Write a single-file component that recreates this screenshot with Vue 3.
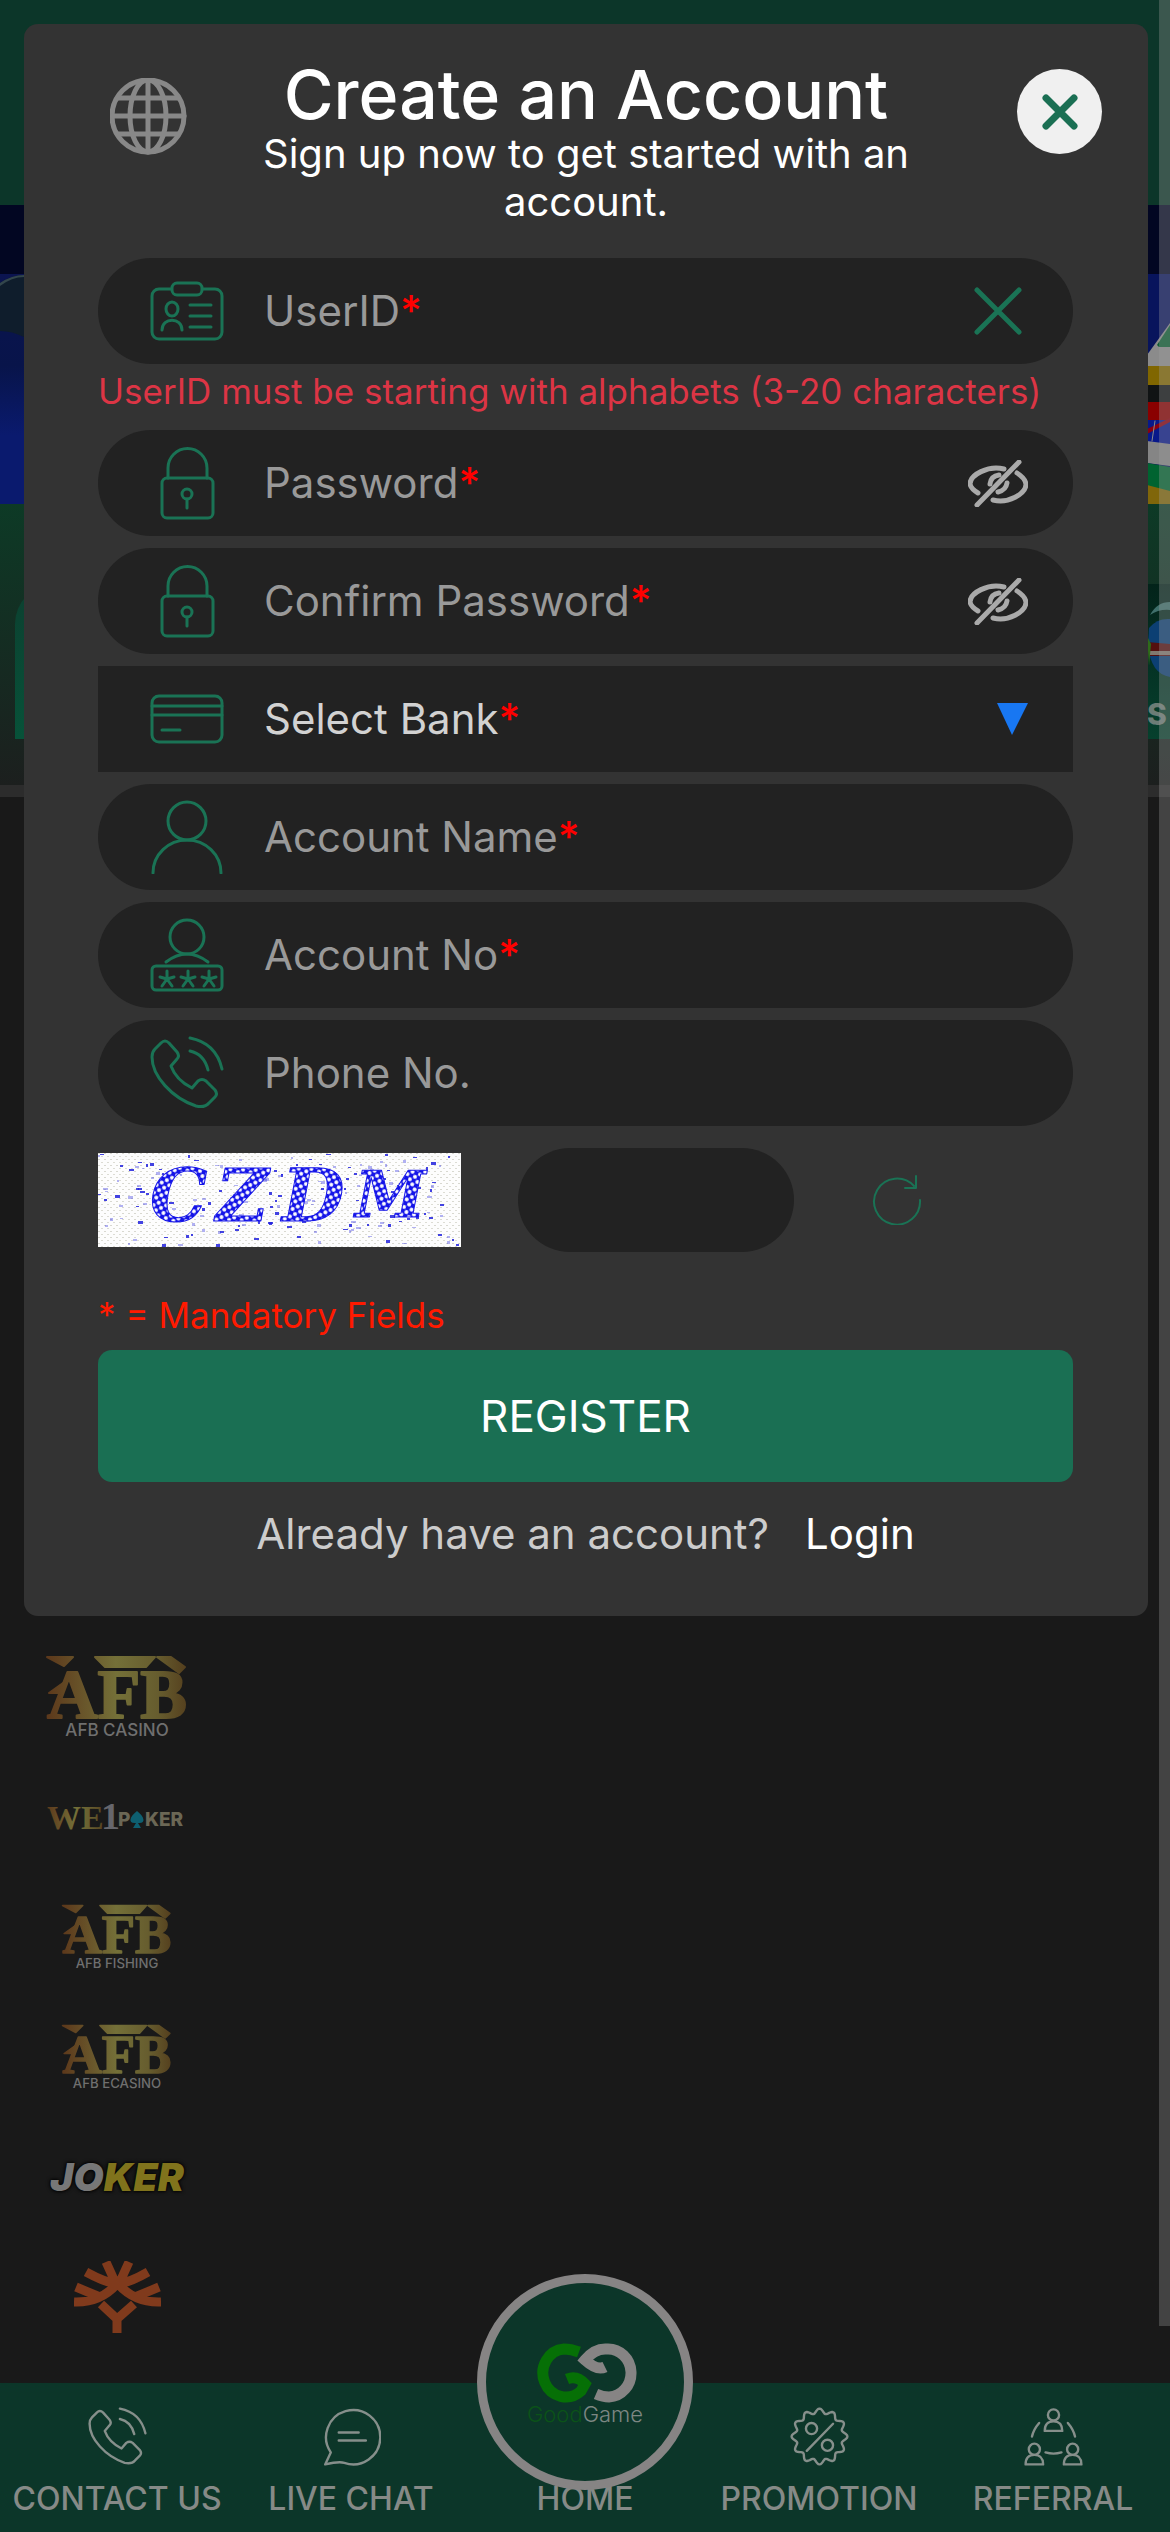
<script setup>
import { ref } from 'vue'

const icons = {
  id: '<rect x="1" y="14" width="70" height="50" rx="7"/><rect x="21" y="8" width="30" height="12" rx="5" fill="#222"/><ellipse cx="21" cy="34" rx="6" ry="7"/><path d="M11 55c0-13 20-13 20 0M39 30h21M39 41h21M39 52h21"/>',
  lock: '<rect x="11" y="31" width="51" height="40" rx="5"/><path d="M17 31V21a19 19 0 0 1 39 0v10M36 52v9"/><circle cx="36" cy="47" r="5"/>',
  card: '<rect x="1" y="13" width="70" height="46" rx="7"/><path d="M1 23h70M1 32h70M11 47h18"/>',
  person: '<circle cx="36" cy="20" r="19"/><path d="M2 72a34 33 0 0 1 68 0"/>',
  account: '<circle cx="36" cy="18" r="17"/><path d="M15 43q21-16 42 0"/><rect x="1" y="47" width="70" height="24" rx="4"/><path d="M16 52v8M9 58l7 2 7-2M11 67l5-7 5 7M37 52v8M30 58l7 2 7-2M32 67l5-7 5 7M58 52v8M51 58l7 2 7-2M53 67l5-7 5 7"/>',
  phone: '<path d="M10 6q4-4 8 0l8 9q3 4 0 7l-6 7q5 14 21 22l6-7q4-3 8 0l9 9q3 4 0 7l-6 6q-4 5-13 3C21 61 1 39 1 20q0-5 3-8zM39 1q26 5 32 31M39 14q14 3 18 19"/>',
  chat: '<path d="M3 71l7-15A34 34 0 1 1 27 69q-7-2-24 2zM20 31h25M20 41h34"/>',
  referral: '<circle cx="36" cy="9" r="7"/><path d="M25 29q0-12 11-12t11 12z"/><circle cx="12" cy="52" r="7"/><path d="M1 71q0-12 11-12t11 12z"/><circle cx="60" cy="52" r="7"/><path d="M49 71q0-12 11-12t11 12zM18 19q-7 8-9 17M54 19q7 8 9 17M26 56q10 3 20 0"/>'
}

const badgePoints = Array.from({ length: 144 }, (_, i) => {
  const a = (i / 144) * Math.PI * 2 - Math.PI / 2
  const r = 32 + 3 * Math.cos(12 * a)
  return `${(36 + r * Math.cos(a)).toFixed(1)},${(36 + r * Math.sin(a)).toFixed(1)}`
}).join(' ')
icons.promo = `<polygon points="${badgePoints}"/><circle cx="26" cy="26" r="7"/><circle cx="46" cy="47" r="7"/><path d="M20 54L53 20"/>`

const userId = ref('')
const form = ref({ password: '', confirm: '', name: '', number: '', phone: '' })
const bank = ref('')
const captcha = ref('')

const passwords = [
  { id: 'password', label: 'Password' },
  { id: 'confirm', label: 'Confirm Password' }
]
const details = [
  { id: 'name', label: 'Account Name', icon: 'person', required: true },
  { id: 'number', label: 'Account No', icon: 'account', required: true },
  { id: 'phone', label: 'Phone No.', icon: 'phone', required: false }
]

let seed = 11
const next = () => (seed = (seed * 16807) % 2147483647) / 2147483647
const specks = Array.from({ length: 190 }, () => ({
  x: Math.round(next() * 360),
  y: Math.round(next() * 92),
  w: 2 + Math.round(next() * 3),
  h: 1 + Math.round(next() * 2),
  o: next() > 0.5 ? 0.85 : 0.35
}))

const navLeft = [
  { label: 'CONTACT US', icon: 'phone' },
  { label: 'LIVE CHAT', icon: 'chat' }
]
const navRight = [
  { label: 'PROMOTION', icon: 'promo' },
  { label: 'REFERRAL', icon: 'referral' }
]
</script>

<template>
  <div class="page">
    <div class="topbar"></div>
    <div class="hero">
      <svg class="hero-left" viewBox="0 0 24 299" aria-hidden="true">
        <defs>
          <linearGradient id="sea" x1="0" y1="0" x2="0" y2="1">
            <stop offset="0" stop-color="#0b1450" />
            <stop offset="0.4" stop-color="#08144a" />
            <stop offset="0.7" stop-color="#0a1a6e" />
          </linearGradient>
        </defs>
        <rect width="24" height="299" fill="#020622" />
        <rect y="69" width="24" height="230" fill="url(#sea)" />
        <path d="M0 78q12-8 24-8v62q-12-6-24-6z" fill="#0f1d2c" />
        <path d="M0 78q12-8 24-8v2q-12 0-24 9z" fill="#33464c" />
      </svg>
      <svg class="hero-right" viewBox="0 0 23 299" aria-hidden="true">
        <rect width="23" height="299" fill="#020622" />
        <rect y="69" width="23" height="230" fill="#08145c" />
        <path d="M0 150L23 118v44H0z" fill="#8b8b8b" />
        <path d="M10 140l13-20v22H12z" fill="#0c5d33" />
        <rect y="161" width="23" height="19" fill="#806600" />
        <rect y="180" width="23" height="17" fill="#101314" />
        <rect y="197" width="23" height="18" fill="#8a0000" />
        <rect y="215" width="23" height="24" fill="#08188a" />
        <path d="M0 229l23-12v-4L0 224z" fill="#8a0010" />
        <path d="M5 236l3-20" stroke="#8b8b8b" />
        <path d="M0 236l23 3v22L0 258z" fill="#858585" />
        <path d="M0 258l23 4v26L0 282z" fill="#006330" />
        <path d="M0 280l23 6v13H0z" fill="#80660a" />
      </svg>
    </div>
    <div class="lobby">
      <div class="tile">
        <div class="tile-end">
          <svg class="ball" viewBox="0 0 23 84" aria-hidden="true">
            <path d="M3 15Q10 2 23 2v8Q12 9 3 15z" fill="#3f6f6b" />
            <path d="M2 28q8-10 21-9v58Q4 74 1 46z" fill="#0c3f73" />
            <path d="M0 42l23 2v12H2z" fill="#54100f" />
            <path d="M2 51h21v4H2z" fill="#82786f" />
            <path d="M0 36l4 8-2 22z" fill="#2f6b1a" />
          </svg>
          <span class="tile-text">S</span>
        </div>
      </div>
    </div>
    <div class="divider"></div>

    <ul class="providers">
      <li>
        <svg class="logo-large" viewBox="0 0 144 84" role="img" aria-label="AFB Casino">
          <defs>
            <linearGradient id="gold" x1="0" x2="1">
              <stop offset="0" stop-color="#5c381b" />
              <stop offset="0.5" stop-color="#747038" />
              <stop offset="0.8" stop-color="#665c2e" />
              <stop offset="1" stop-color="#55401e" />
            </linearGradient>
          </defs>
          <g class="gold-mark">
            <text class="afb" x="72" y="63" text-anchor="middle">AFB</text>
            <path d="M2 2h26l-9 9zM50 2h60l-9 10H60zM112 2h14l14 10-6 6zM4 38l14-10v10z" />
          </g>
          <text class="afb-sub" x="72" y="81" text-anchor="middle">AFB CASINO</text>
        </svg>
      </li>
      <li>
        <svg class="logo-large" viewBox="0 0 144 84" role="img" aria-label="We1Poker">
          <text class="we" x="2" y="54" fill="url(#gold)">WE</text>
          <text class="we-one" x="56" y="54">1</text>
          <text class="we-poker" x="73" y="51">P</text>
          <path d="M92 36c8 6 9 13 1 12l3 5h-8l3-5c-8 1-7-6 1-12z" fill="#0e5f70" />
          <text class="we-poker" x="100" y="51">KER</text>
        </svg>
      </li>
      <li v-for="name in ['AFB FISHING', 'AFB ECASINO']" :key="name">
        <svg class="logo-small" viewBox="0 0 144 84" role="img" :aria-label="name">
          <g class="gold-mark">
            <text class="afb" x="72" y="63" text-anchor="middle">AFB</text>
            <path d="M2 2h26l-9 9zM50 2h60l-9 10H60zM112 2h14l14 10-6 6zM4 38l14-10v10z" />
          </g>
          <text class="afb-sub" x="72" y="82" text-anchor="middle">{{ name }}</text>
        </svg>
      </li>
      <li>
        <p class="joker"><span class="joker-a">JO</span><span class="joker-b">KER</span></p>
      </li>
      <li>
        <svg class="tree" viewBox="0 0 87 72" aria-hidden="true">
          <path d="M43 72V58L27 43M43 58l17-15" />
          <path d="M0 41Q26 42 43 23Q55 22 74 11M87 41Q61 42 44 23Q32 22 12 11M2 26l24 10M85 26L61 36M32 1l10 22M55 1L45 23" />
        </svg>
      </li>
    </ul>

    <nav class="bottom-nav">
      <a v-for="n in navLeft" :key="n.label" href="#" class="nav-item">
        <svg class="nav-icon" viewBox="-1 -1 74 74" aria-hidden="true" v-html="icons[n.icon]"></svg>
        <span>{{ n.label }}</span>
      </a>
      <a href="#" class="nav-item home">
        <span>HOME</span>
        <span class="home-disc">
          <svg class="gg" viewBox="0 0 120 60" aria-hidden="true">
            <path d="M54 9Q46 6 39 6A23 24 0 1 0 56 48L60 41Q52 32 42 36" stroke="#067006" />
            <path d="M80 24Q72 28 60 17Q70 5 82 6A23 24 0 0 1 84 54Q78 54 71 51" stroke="#868484" />
          </svg>
          <span class="brand"><span class="good">Good</span>Game</span>
        </span>
      </a>
      <a v-for="n in navRight" :key="n.label" href="#" class="nav-item">
        <svg class="nav-icon" viewBox="-1 -1 74 74" aria-hidden="true" v-html="icons[n.icon]"></svg>
        <span>{{ n.label }}</span>
      </a>
    </nav>

    <div class="scrollbar"></div>

    <section class="modal" role="dialog" aria-labelledby="modal-title">
      <header class="modal-head">
        <button type="button" class="language" aria-label="Language">
          <svg viewBox="0 0 77 77" aria-hidden="true">
            <circle cx="38" cy="38" r="36" />
            <ellipse cx="38" cy="38" rx="18" ry="36" />
            <path d="M38 2v72M2 38h72M8 20h60M8 56h60" />
          </svg>
        </button>
        <div class="titles">
          <h1 id="modal-title">Create an Account</h1>
          <p>Sign up now to get started with an account.</p>
        </div>
        <button type="button" class="close" aria-label="Close">
          <svg viewBox="0 0 36 36" aria-hidden="true"><path d="M4 4l28 28M32 4L4 32" /></svg>
        </button>
      </header>

      <form class="form" @submit.prevent>
        <div class="group">
          <div class="field">
            <svg class="icon" viewBox="-1 -1 74 74" aria-hidden="true" v-html="icons.id"></svg>
            <div class="entry">
              <label for="userid">UserID<b>*</b></label>
              <input id="userid" v-model="userId" type="text" />
            </div>
            <button type="button" class="end" aria-label="Clear">
              <svg class="clear" viewBox="0 0 48 48" aria-hidden="true"><path d="M3 3l42 42M45 3L3 45" /></svg>
            </button>
          </div>
          <p class="error">UserID must be starting with alphabets (3-20 characters)</p>
        </div>

        <div v-for="p in passwords" :key="p.id" class="field">
          <svg class="icon" viewBox="-1 -1 74 74" aria-hidden="true" v-html="icons.lock"></svg>
          <div class="entry">
            <label :for="p.id">{{ p.label }}<b>*</b></label>
            <input :id="p.id" v-model="form[p.id]" type="password" />
          </div>
          <button type="button" class="end" aria-label="Show password">
            <svg class="eye" viewBox="0 0 60 47" aria-hidden="true">
              <path d="M36 9C20 5 2 15 2 24q1 5 8 9M25 40C40 44 58 34 58 24q-1-6-9-11" />
              <path d="M22 24q1-8 9-9M30 32q8-2 9-9" />
              <path d="M9 45L51 2" />
            </svg>
          </button>
        </div>

        <div class="field square">
          <svg class="icon" viewBox="-1 -1 74 74" aria-hidden="true" v-html="icons.card"></svg>
          <div class="entry">
            <label for="bank" class="bright">Select Bank<b>*</b></label>
            <select id="bank" v-model="bank"></select>
          </div>
          <svg class="arrow" viewBox="0 0 31 32" aria-hidden="true"><path d="M0 0h31L15 32z" /></svg>
        </div>

        <div v-for="d in details" :key="d.id" class="field">
          <svg class="icon" viewBox="-1 -1 74 74" aria-hidden="true" v-html="icons[d.icon]"></svg>
          <div class="entry">
            <label :for="d.id">{{ d.label }}<b v-if="d.required">*</b></label>
            <input :id="d.id" v-model="form[d.id]" type="text" />
          </div>
        </div>

        <div class="captcha-row">
          <svg class="captcha" viewBox="0 0 363 94" role="img" aria-label="CZDM">
            <defs>
              <pattern id="mesh" width="8" height="8" patternUnits="userSpaceOnUse" patternTransform="rotate(20)">
                <rect width="8" height="8" fill="#1414e8" />
                <circle cx="2" cy="2" r="2" fill="#fff" />
                <circle cx="6" cy="6" r="2" fill="#fff" />
              </pattern>
              <pattern id="grain" width="6" height="6" patternUnits="userSpaceOnUse">
                <rect width="6" height="6" fill="#fdfdfd" />
                <rect width="2" height="1" fill="#d8d8d0" />
                <rect x="3" y="3" width="2" height="1" fill="#dcdcd4" />
              </pattern>
            </defs>
            <rect width="363" height="94" fill="url(#grain)" />
            <rect
              v-for="(s, i) in specks"
              :key="i"
              :x="s.x"
              :y="s.y"
              :width="s.w"
              :height="s.h"
              :opacity="s.o"
              fill="#2222dd"
            />
            <text class="captcha-text" x="52 118 184 257" y="68">CZD<tspan class="captcha-last" dy="-4">M</tspan></text>
          </svg>
          <input v-model="captcha" class="captcha-input" type="text" aria-label="Captcha code" />
          <button type="button" class="refresh" aria-label="Refresh captcha">
            <svg viewBox="0 0 50 50" aria-hidden="true">
              <path d="M48 25A23 23 0 1 1 42 11M44 1v12H33" />
            </svg>
          </button>
        </div>

        <p class="mandatory">* = Mandatory Fields</p>
        <button type="submit" class="register">REGISTER</button>
        <p class="already"><span>Already have an account?</span><a href="#">Login</a></p>
      </form>
    </section>
  </div>
</template>

<style>
body {
  margin: 0;
  background: #191919;
}
</style>

<style scoped>
* {
  box-sizing: border-box;
}
.page {
  position: relative;
  display: flex;
  flex-direction: column;
  min-height: 100vh;
  font-family: Inter, 'Noto Sans', sans-serif;
  color: #fff;
  background: #191919;
}
p,
h1,
ul {
  margin: 0;
  padding: 0;
}
button {
  padding: 0;
  border: 0;
  background: none;
  font-family: inherit;
  color: inherit;
}
svg {
  display: block;
  fill: none;
  stroke-linecap: round;
  stroke-linejoin: round;
}

/* Page behind the dialog */
.topbar {
  height: 205px;
  background: #0c3629;
}
.hero {
  display: flex;
  justify-content: space-between;
  height: 299px;
  background: #08145c;
}
.hero-left {
  width: 24px;
}
.hero-right {
  width: 23px;
}
.lobby {
  height: 281px;
  padding: 80px 0 0 15px;
  background: linear-gradient(#0d3a26, #1c1f1e);
}
.tile {
  display: flex;
  justify-content: flex-end;
  height: 155px;
  border-radius: 40px 0 0 0;
  background: linear-gradient(#0c4030, #075239);
}
.tile-end {
  width: 23px;
  padding-top: 16px;
  background: linear-gradient(#03231a, #06402d);
}
.ball {
  width: 23px;
  height: 84px;
}
.tile-text {
  display: block;
  font-size: 30px;
  font-weight: 800;
  line-height: 60px;
  color: #6c7d76;
}
.divider {
  height: 12px;
  background: #2c2c2c;
}
.providers {
  width: 234px;
  padding-top: 840px;
  list-style: none;
}
.providers li {
  display: flex;
  align-items: center;
  justify-content: center;
  height: 120px;
}
.logo-large {
  width: 144px;
}
.logo-small {
  width: 112px;
}
.gold-mark {
  fill: url(#gold);
  stroke: url(#gold);
  stroke-width: 2;
}
.afb {
  font: bold 70px 'Liberation Serif', serif;
}
.afb-sub {
  font: 500 17px Inter, sans-serif;
  fill: #6f6f6f;
}
.we {
  font: bold 34px 'Liberation Serif', serif;
}
.we-one {
  font: bold 38px 'Liberation Serif', serif;
  fill: #66666c;
}
.we-poker {
  font: 800 19px Inter, sans-serif;
  fill: #6b6755;
}
.joker {
  font-size: 39px;
  font-style: italic;
  font-weight: 900;
  line-height: 40px;
  text-shadow: 0 0 4px #000, 0 0 3px #000;
}
.joker-a {
  color: #777;
}
.joker-b {
  color: #80731c;
}
.tree {
  width: 87px;
  stroke: #803a1c;
  stroke-width: 9;
  stroke-linecap: butt;
  stroke-linejoin: miter;
}
.bottom-nav {
  display: grid;
  grid-template-columns: repeat(5, minmax(0, 1fr));
  height: 149px;
  margin-top: auto;
  background: #0c3629;
}
.nav-item {
  position: relative;
  display: flex;
  flex-direction: column;
  align-items: center;
  justify-content: flex-end;
  gap: 16px;
  padding-bottom: 16px;
  font-size: 32px;
  font-weight: 500;
  line-height: 34px;
  white-space: nowrap;
  text-decoration: none;
  color: #868a87;
}
.nav-icon {
  width: 59px;
  height: 59px;
  stroke: #868f8b;
  stroke-width: 3;
}
.home-disc {
  position: absolute;
  top: -109px;
  display: flex;
  flex-direction: column;
  align-items: center;
  width: 216px;
  height: 216px;
  padding-top: 60px;
  border: 9px solid #868484;
  border-radius: 50%;
  background: #0c3629;
}
.gg {
  width: 120px;
  height: 60px;
  stroke-width: 11;
  stroke-linecap: butt;
  stroke-linejoin: miter;
}
.brand {
  font-size: 22px;
  font-weight: 300;
  line-height: 22px;
  color: #7d8783;
}
.good {
  color: #0b5218;
}
.scrollbar {
  position: absolute;
  top: 0;
  right: 0;
  bottom: 206px;
  width: 11px;
  background: rgba(160, 160, 160, 0.32);
}

/* Dialog */
.modal {
  position: absolute;
  top: 24px;
  left: 24px;
  right: 22px;
  padding-bottom: 58px;
  border-radius: 14px;
  background: #333;
}
.modal-head {
  display: grid;
  grid-template-columns: 117px 1fr 117px;
  padding: 34px 46px 0;
}
.language {
  justify-self: end;
  width: 77px;
  height: 77px;
  margin-top: 20px;
  stroke: #888;
  stroke-width: 5;
}
.close {
  display: grid;
  place-items: center;
  justify-self: end;
  width: 85px;
  height: 85px;
  margin-top: 11px;
  border-radius: 50%;
  background: #f0f0f0;
}
.close svg {
  width: 36px;
  stroke: #1a6f53;
  stroke-width: 7;
}
.titles {
  justify-self: center;
  max-width: 740px;
  text-align: center;
}
h1 {
  font-size: 68px;
  font-weight: 500;
  line-height: 72px;
}
.titles p {
  font-size: 40px;
  line-height: 48px;
}
.form {
  display: flex;
  flex-direction: column;
  gap: 12px;
  padding: 32px 75px 0 74px;
}
.field {
  display: flex;
  align-items: center;
  height: 106px;
  padding: 0 45px 0 52px;
  border-radius: 53px;
  background: #222;
}
.square {
  border-radius: 0;
}
.icon {
  flex: none;
  width: 74px;
  height: 74px;
  stroke: #1a7355;
  stroke-width: 3;
}
.entry {
  display: grid;
  flex: 1;
  align-items: center;
  padding-left: 40px;
  font-size: 42px;
  line-height: 48px;
}
.entry label,
.entry input,
.entry select {
  grid-area: 1 / 1;
}
.entry label {
  z-index: 1;
  pointer-events: none;
  color: #999;
}
.entry label.bright {
  color: #d2d2d2;
}
.entry b {
  font-weight: 500;
  color: #f00;
}
.entry input,
.entry select {
  width: 100%;
  height: 80px;
  padding: 0;
  border: 0;
  outline: 0;
  appearance: none;
  background: none;
  font: inherit;
  color: #ddd;
}
.end {
  display: grid;
  place-items: center;
  width: 60px;
}
.clear {
  width: 48px;
  stroke: #1a7355;
  stroke-width: 5;
}
.eye {
  width: 60px;
  stroke: #aaa;
  stroke-width: 5;
}
.arrow {
  width: 31px;
}
.arrow path {
  fill: #1877f2;
}
.error {
  margin: 7px 0;
  font-size: 35px;
  line-height: 40px;
  white-space: nowrap;
  color: #dc3545;
}
.captcha-row {
  display: flex;
  align-items: center;
  margin-top: 10px;
}
.captcha {
  width: 363px;
  height: 94px;
  margin-right: 57px;
}
.captcha-text {
  font: italic bold 72px 'DejaVu Serif', serif;
  fill: url(#mesh);
  stroke: #1414e8;
  stroke-width: 1;
}
.captcha-last {
  font-size: 64px;
}
.captcha-input {
  width: 276px;
  height: 104px;
  padding: 0 40px;
  border: 0;
  border-radius: 52px;
  background: #222;
  font-family: inherit;
  font-size: 42px;
  color: #ddd;
}
.refresh {
  margin-left: 78px;
}
.refresh svg {
  width: 50px;
  stroke: #1a7355;
  stroke-width: 2;
}
.mandatory {
  margin-top: 31px;
  font-size: 35px;
  line-height: 40px;
  color: #ff1a00;
}
.register {
  height: 132px;
  margin-top: 3px;
  border-radius: 14px;
  background: #1a6f53;
  font-size: 44px;
}
.already {
  display: flex;
  justify-content: center;
  gap: 36px;
  margin-top: 16px;
  font-size: 42px;
  line-height: 48px;
  color: #ccc;
}
.already a {
  text-decoration: none;
  color: #fff;
}
</style>
